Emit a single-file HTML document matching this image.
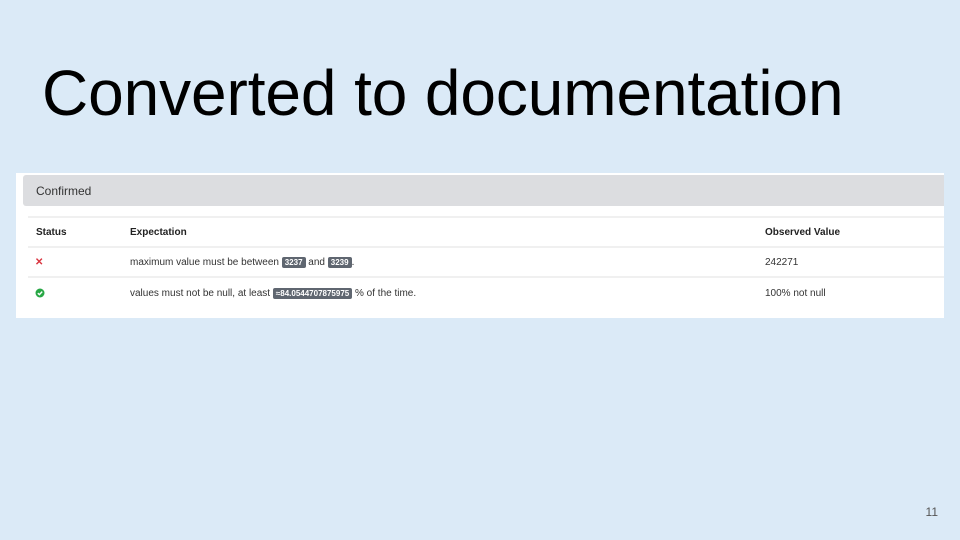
<!DOCTYPE html>
<html><head><style>
body{margin:0;width:960px;height:540px;background:#dbeaf7;position:relative;overflow:hidden;font-family:"Liberation Sans",Arial,sans-serif}
.t{position:absolute;left:42px;top:56px;font-size:64px;color:#000;white-space:nowrap;letter-spacing:-0.1px}
.p{position:absolute;left:16px;top:173px;width:928px;height:145px;background:#fff}
.h{position:absolute;left:23px;top:175px;width:921px;height:31px;background:#dcdde0;border-radius:3px 0 0 3px}
.h span{position:absolute;left:13px;top:9px;font-size:12px;color:#333}
.c{position:absolute;font-size:10px;color:#333;white-space:nowrap}
.b{font-weight:bold;color:#222}
.l{position:absolute;left:28px;width:916px;height:2px;background:#f0f0f0}
.bd{display:inline-block;background:#5f6670;color:#fff;font-size:8px;font-weight:bold;padding:1px 3px;border-radius:2px;vertical-align:0px;line-height:9px}
.n{position:absolute;right:22px;top:505px;font-size:12px;color:#555}
</style></head><body>
<div class="t">Converted to documentation</div>
<div class="p"></div>
<div class="h"><span>Confirmed</span></div>
<div class="l" style="top:216px"></div>
<div class="c b" style="left:36px;top:227px">Status</div>
<div class="c b" style="left:130px;top:227px">Expectation</div>
<div class="c b" style="left:765px;top:227px">Observed Value</div>
<div class="l" style="top:246px"></div>
<div class="c" style="left:35px;top:257px;color:#d9343f;font-weight:bold;font-size:10px">✕</div>
<div class="c" style="left:130px;top:257px">maximum value must be between <span class="bd">3237</span> and <span class="bd">3239</span>.</div>
<div class="c" style="left:765px;top:257px">242271</div>
<div class="l" style="top:276px"></div>
<svg style="position:absolute;left:35px;top:288px" width="10" height="10" viewBox="0 0 10 10"><circle cx="5" cy="5" r="4.5" fill="#28a745"/><path d="M2.8 5.2L4.4 6.6L7.2 3.6" stroke="#fff" stroke-width="1.4" fill="none"/></svg>
<div class="c" style="left:130px;top:288px">values must not be null, at least <span class="bd">≈84.0544707875975</span> % of the time.</div>
<div class="c" style="left:765px;top:288px">100% not null</div>
<div class="n">11</div>
</body></html>
